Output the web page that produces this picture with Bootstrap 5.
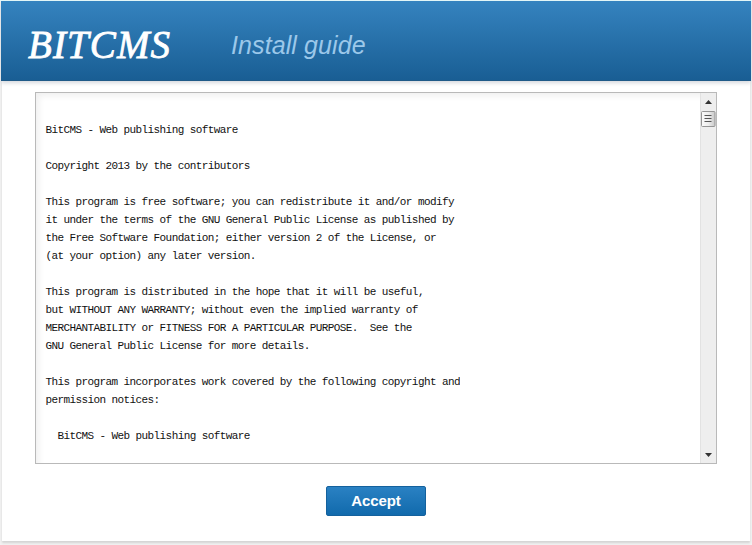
<!DOCTYPE html>
<html lang="en">
<head>
<meta charset="utf-8">
<title>BITCMS Install guide</title>
<meta name="viewport" content="width=device-width, initial-scale=1">
<link href="https://cdn.jsdelivr.net/npm/bootstrap@5.3.0/dist/css/bootstrap.min.css" rel="stylesheet">
<style>
body { background: #f2f2f2; font-family: "Liberation Sans", Arial, sans-serif; height: 545px; }
.install-panel { width: 748px; height: 541px; margin: 0 2px; background: #fff; box-shadow: 0 2px 2px #d4d4d4; }
.install-header { height: 80px; margin: 0 -1px; padding-left: 27px; border-bottom: 1px solid #1f5a88; background: linear-gradient(#3583bf, #195e94); box-shadow: 0 2px 4px #d5d8dd; }
.top-line { height: 1px; margin: 0 -2px; background: #e6fafb; }
.brand-name { width: 203px; font: italic 39px/1 "Liberation Serif", "Times New Roman", serif; letter-spacing: 1.1px; color: #fff; -webkit-text-stroke: .8px #fff; white-space: nowrap; padding-top: 7px; }
.guide-title { font-size: 25px; line-height: 30px; letter-spacing: .1px; font-style: italic; color: #9cc8ea; padding-top: 8px; margin: 0; font-weight: 400; }
.license-box { width: 682px; height: 372px; margin: 11px 0 0 33px; border: 1px solid #b9b9b9; box-shadow: inset 5px 5px 6px -2px #f0f0f0; }
.license-text { font: 11px/18px "Liberation Mono", "Courier New", monospace; letter-spacing: -.595px; color: #111; padding: 28px 0 0 9.500px; }
.scroll-track { width: 16px; background: #eee; border-left: 1px solid #e2e2e2; }
.scroll-track svg { display: block; }
.btn-accept { width: 100px; height: 30px; margin-top: 22px; font-size: 15px; font-weight: 700; line-height: 28px; letter-spacing: -.1px; color: #fff; border: 1px solid #14619d; border-radius: 2px; background: linear-gradient(#2a81c3, #116aac); }
.btn-accept:hover { color: #fff; background: #116aac; }
</style>
</head>
<body class="overflow-hidden">
<main class="install-panel">
  <div class="top-line"></div>
  <header class="install-header d-flex align-items-center">
    <div class="brand-name">BITCMS</div>
    <h1 class="guide-title">Install guide</h1>
  </header>
  <section class="license-box d-flex justify-content-between overflow-hidden">
    <pre class="license-text m-0 overflow-hidden">BitCMS - Web publishing software

Copyright 2013 by the contributors

This program is free software; you can redistribute it and/or modify
it under the terms of the GNU General Public License as published by
the Free Software Foundation; either version 2 of the License, or
(at your option) any later version.

This program is distributed in the hope that it will be useful,
but WITHOUT ANY WARRANTY; without even the implied warranty of
MERCHANTABILITY or FITNESS FOR A PARTICULAR PURPOSE.  See the
GNU General Public License for more details.

This program incorporates work covered by the following copyright and
permission notices:

  BitCMS - Web publishing software</pre>
    <div class="scroll-track d-flex flex-column justify-content-between">
      <svg width="15" height="36" viewBox="0 0 15 36">
        <defs><linearGradient id="thumb"><stop offset="0" stop-color="#fafafa"/><stop offset=".5" stop-color="#eee"/><stop offset="1" stop-color="#c8c8c8"/></linearGradient></defs>
        <path d="M4 11 7.5 7 11 11Z" fill="#333"/>
        <rect x=".5" y="18.500" width="13.500" height="15" rx="1" fill="url(#thumb)" stroke="#959595"/>
        <path d="M3.500 22.500h7M3.500 25.500h7M3.500 28.500h7" stroke="#555"/>
      </svg>
      <svg width="15" height="16" viewBox="0 0 15 16"><path d="M4 6H11L7.500 10Z" fill="#333"/></svg>
    </div>
  </section>
  <div class="text-center"><button type="button" class="btn btn-accept p-0">Accept</button></div>
</main>
<script src="https://cdn.jsdelivr.net/npm/bootstrap@5.3.0/dist/js/bootstrap.bundle.min.js"></script>
</body>
</html>
